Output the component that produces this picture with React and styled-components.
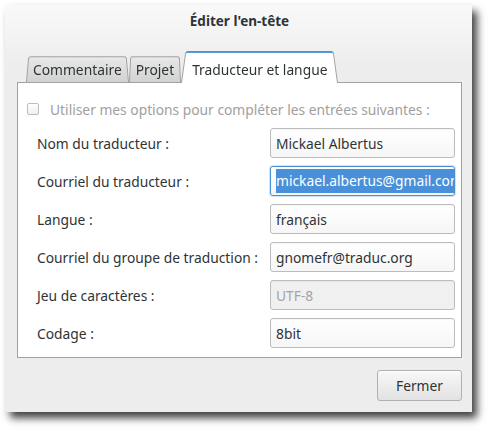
import React from 'react';
import styled, { createGlobalStyle } from 'styled-components';

const GlobalStyle = createGlobalStyle`
  html, body {
    margin: 0;
    padding: 0;
    background: #ffffff;
  }
  body {
    font-family: "Noto Sans", "DejaVu Sans", sans-serif;
    font-size: 13.8px;
    color: #2e3436;
  }
`

const Stage = styled.div`
  width: 491px;
  height: 431px;
  padding: 5px 0 0 5px;
  box-sizing: border-box;
`

const Window = styled.div`
  width: 467px;
  height: 407px;
  box-sizing: border-box;
  background: linear-gradient(to bottom, #f9f9f9 0%, #ededed 60px, #ededed 100%);
  box-shadow: 5px 6px 8px rgba(0, 0, 0, 0.75);
  display: flex;
  flex-direction: column;
  padding: 0 10px 0 12px;
`

const Title = styled.div`
  height: 31px;
  padding-top: 7px;
  box-sizing: border-box;
  text-align: center;
  font-weight: bold;
  font-size: 13.5px;
  color: #2e3436;
`

const TabBar = styled.div`
  display: flex;
  align-items: flex-end;
  height: 46px;
  padding-left: 9px;
  box-sizing: border-box;
  position: relative;
  z-index: 1;
`

const Tab = styled.div`
  position: relative;
  height: ${p => (p.$active ? '34px' : '27px')};
  padding: 0 ${p => (p.$active ? '11px' : '7px')} ${p => (p.$active ? '4px' : '3px')};
  display: flex;
  align-items: flex-end;
  box-sizing: border-box;
  color: #2e3436;
  margin-bottom: ${p => (p.$active ? '-1px' : '0')};
  &::before {
    content: '';
    position: absolute;
    inset: 0;
    z-index: -1;
    border: 1px solid #a1a1a1;
    border-bottom: none;
    border-top: ${p => (p.$active ? '2px solid #4a90d9' : '1px solid #a1a1a1')};
    border-radius: 3px 3px 0 0;
    background: ${p =>
      p.$active ? '#ffffff' : 'linear-gradient(to bottom, #e8e8e8, #d2d2d2)'};
    transform: perspective(60px) rotateX(6deg);
    transform-origin: bottom;
  }
`

const Notebook = styled.div`
  width: 445px;
  height: 276px;
  box-sizing: border-box;
  background: #ffffff;
  border: 1px solid #a1a1a1;
  padding: 17px 6px 0 9px;
  display: flex;
  flex-direction: column;
`

const CheckRow = styled.label`
  display: flex;
  align-items: center;
  gap: 11px;
  color: #a0a0a0;
  height: 18px;
  margin-bottom: 10px;
`

const Check = styled.span`
  width: 10px;
  height: 10px;
  border: 1px solid #bdbdbd;
  border-radius: 2px;
  background: linear-gradient(to bottom, #ffffff, #efefef);
`

const Form = styled.div`
  display: grid;
  grid-template-columns: 243px 185px;
  row-gap: 8px;
  align-items: center;
`

const Label = styled.span`
  padding-left: 10px;
  color: #2e3436;
`

const Entry = styled.div`
  height: 30px;
  box-sizing: border-box;
  border: 1px solid ${p => (p.$focus ? '#4a90d9' : '#bcbcbc')};
  border-radius: 3px;
  background: ${p =>
    p.$disabled ? '#f0f0f0' : 'linear-gradient(to bottom, #ffffff, #f6f6f6)'};
  box-shadow: ${p => (p.$focus ? '0 0 0 1px rgba(74,144,217,0.25)' : 'inset 0 1px 1px rgba(0,0,0,0.04)')};
  color: ${p => (p.$disabled ? '#a5a5a5' : '#2e3436')};
  padding: 0 4px 0 5px;
  display: flex;
  align-items: center;
  overflow: hidden;
  white-space: nowrap;
`

const Selected = styled.span`
  background: #4a90d9;
  color: #ffffff;
  padding: 2px 0 3px;
`

const Footer = styled.div`
  display: flex;
  justify-content: flex-end;
  padding-top: 12px;
`

const Button = styled.button`
  width: 85px;
  height: 31px;
  font: inherit;
  color: #2e3436;
  border: 1px solid #b0b0b0;
  border-radius: 3px;
  background: linear-gradient(to bottom, #f8f8f8, #e2e2e2);
  box-shadow: inset 0 1px 0 #ffffff;
`

const fields = [
  { label: 'Nom du traducteur :', value: 'Mickael Albertus' },
  { label: 'Courriel du traducteur :', value: 'mickael.albertus@gmail.com', focus: true },
  { label: 'Langue :', value: 'français' },
  { label: 'Courriel du groupe de traduction :', value: 'gnomefr@traduc.org' },
  { label: 'Jeu de caractères :', value: 'UTF-8', disabled: true },
  { label: 'Codage :', value: '8bit' },
]

const App = () => {
  return (
    <Stage>
      <GlobalStyle />
      <Window>
        <Title>Éditer l'en-tête</Title>
        <TabBar>
          <Tab>Commentaire</Tab>
          <Tab>Projet</Tab>
          <Tab $active>Traducteur et langue</Tab>
        </TabBar>
        <Notebook>
          <CheckRow>
            <Check />
            Utiliser mes options pour compléter les entrées suivantes :
          </CheckRow>
          <Form>
            {fields.map(f => (
              <React.Fragment key={f.label}>
                <Label>{f.label}</Label>
                <Entry $focus={f.focus} $disabled={f.disabled}>
                  {f.focus ? <Selected>{f.value}</Selected> : f.value}
                </Entry>
              </React.Fragment>
            ))}
          </Form>
        </Notebook>
        <Footer>
          <Button>Fermer</Button>
        </Footer>
      </Window>
    </Stage>
  );
}

export default App;
